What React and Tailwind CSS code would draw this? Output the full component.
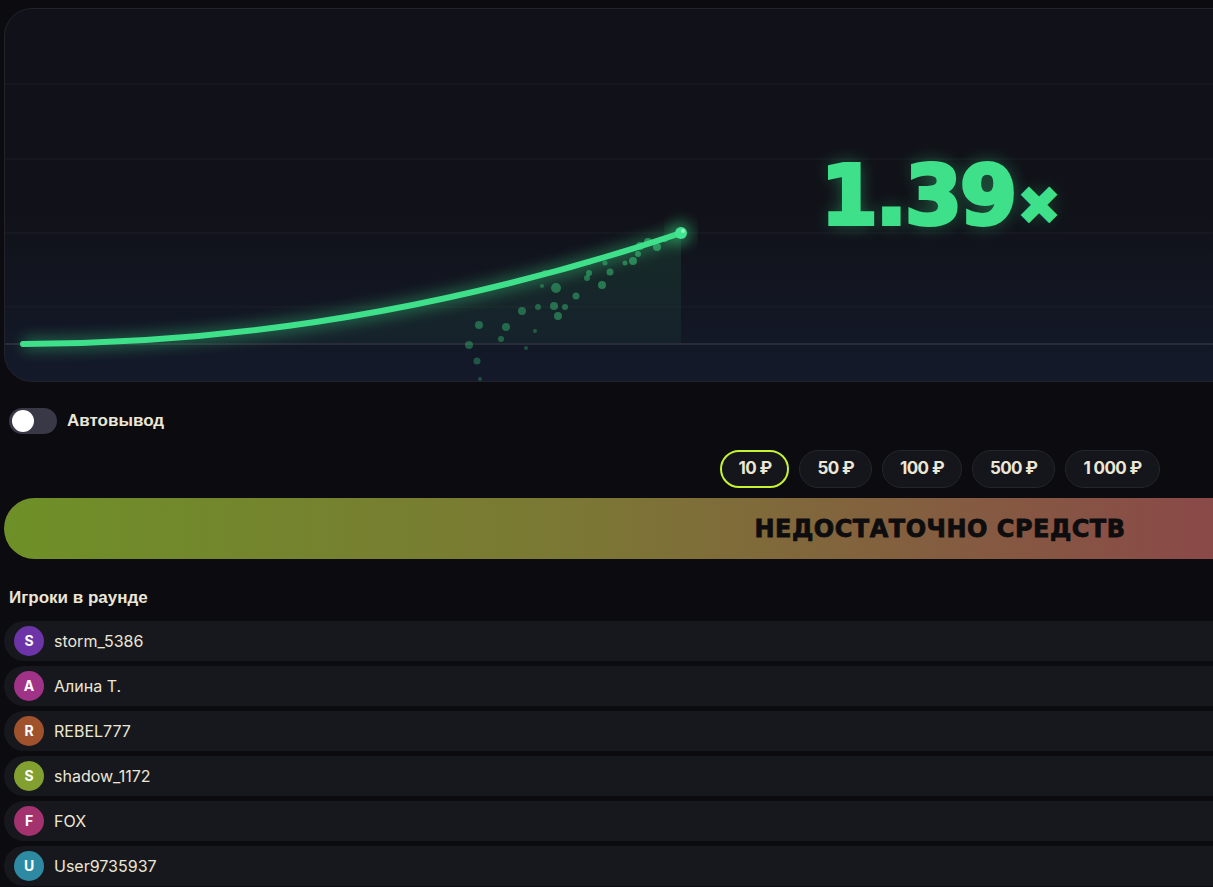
import React from "react";

const particles = [
  [478, 324, 4, 0.55], [468, 344, 4, 0.5], [476, 360, 3.5, 0.45], [479, 378, 2, 0.4],
  [505, 326, 4, 0.55], [500, 338, 3, 0.5], [525, 347, 2, 0.4], [521, 310, 4, 0.55],
  [537, 306, 3, 0.5], [534, 330, 2, 0.45], [553, 305, 4, 0.6], [557, 315, 4, 0.6],
  [564, 306, 3, 0.55], [555, 287, 5, 0.6], [541, 285, 2, 0.5], [544, 272, 3, 0.6],
  [575, 295, 3.5, 0.6], [586, 277, 3, 0.6], [588, 272, 3, 0.65], [588, 261, 3, 0.6],
  [601, 284, 4, 0.65], [609, 271, 3.5, 0.65], [604, 262, 2.5, 0.6], [624, 262, 2.5, 0.65],
  [632, 260, 4, 0.7], [637, 253, 3, 0.7], [639, 245, 4, 0.75], [647, 241, 4, 0.75],
  [656, 246, 4, 0.75], [664, 238, 3, 0.8],
];

const players = [
  { l: "S", name: "storm_5386", c: "bg-[#6c34a6]" },
  { l: "A", name: "Алина Т.", c: "bg-[#a03388]" },
  { l: "R", name: "REBEL777", c: "bg-[#a0522d]" },
  { l: "S", name: "shadow_1172", c: "bg-[#82a02f]" },
  { l: "F", name: "FOX", c: "bg-[#a3326f]" },
  { l: "U", name: "User9735937", c: "bg-[#2e8aa3]" },
];

const chips = ["10 ₽", "50 ₽", "100 ₽", "500 ₽", "1 000 ₽"];

function Chart() {
  // curve: quadratic from (18,335) to (676,224) in card coords (card at x=4,y=8)
  const curve = "M18 335 Q347 335 676 224";
  return (
    <div className="relative h-[374px] overflow-hidden rounded-[28px] border border-[#22232b] bg-[linear-gradient(180deg,#111219_0%,#111219_55%,#141a2b_100%)]">
      <svg className="absolute inset-0" width="1872" height="374">
        <defs>
          <linearGradient id="area" x1="0" y1="0" x2="0" y2="1">
            <stop offset="0%" stopColor="#3ddc84" stopOpacity="0.12" />
            <stop offset="100%" stopColor="#3ddc84" stopOpacity="0.05" />
          </linearGradient>
          <filter id="glow" x="-20%" y="-50%" width="140%" height="200%">
            <feGaussianBlur stdDeviation="7" />
          </filter>
        </defs>
        {[75, 150, 224, 298].map((y) => (
          <line key={y} x1="0" x2="1872" y1={y} y2={y} stroke="#1d1f27" strokeWidth="1" />
        ))}
        <path d={`${curve} L676 335 Z`} fill="url(#area)" />
        <line x1="0" x2="1872" y1="335" y2="335" stroke="#2a2d38" strokeWidth="2" />
        {particles.map(([x, y, r, o], i) => (
          <circle key={i} cx={x - 4} cy={y - 8} r={r} fill="#3ddc84" opacity={o * 0.7} />
        ))}
        <path d={curve} fill="none" stroke="#3ddc84" strokeWidth="14" opacity="0.35" filter="url(#glow)" />
        <path d={curve} fill="none" stroke="#3ee08a" strokeWidth="6" strokeLinecap="round" />
        <circle cx="676" cy="224" r="12" fill="#3ddc84" opacity="0.4" filter="url(#glow)" />
        <circle cx="676" cy="224" r="6" fill="#42e690" />
        <circle cx="678" cy="222" r="2" fill="#b8f7d2" opacity="0.7" />
      </svg>
      <div className="absolute left-0 right-0 top-[146px] flex justify-center">
        <div className="flex items-end font-['DejaVu_Sans',sans-serif] font-bold text-[#3ee08a] [-webkit-text-stroke:4px_#3ee08a] [text-shadow:0_0_18px_rgba(62,224,138,0.45)]">
          <span className="text-[82px] leading-[82px] tracking-[-2px]">1.39</span>
          <span className="mb-[10px] ml-[4px] text-[48px] leading-[48px] [-webkit-text-stroke:6px_#3ee08a]">×</span>
        </div>
      </div>
    </div>
  );
}

export default function App() {
  return (
    <div className="h-screen w-full overflow-hidden bg-[#0b0b10] font-['Inter',sans-serif]">
      <div className="ml-1 w-[1872px] pt-2">
        <Chart />

        <div className="mt-[26px] flex items-center pl-[5px]">
          <div className="flex h-[26px] w-12 items-center rounded-full bg-[#383846] px-[3px]">
            <div className="h-[22px] w-[22px] rounded-full bg-white" />
          </div>
          <span className="ml-[10px] font-['Liberation_Sans',sans-serif] text-[17px] font-bold text-[#ece6d6]">
            Автовывод
          </span>
        </div>

        <div className="mt-4 flex justify-center gap-[10px]">
          {chips.map((c, i) => (
            <button
              key={c}
              className={
                i === 0
                  ? "h-[38px] rounded-full border-2 border-[#c6f432] bg-[#15161b] px-[16px] text-[17px] font-bold tracking-[-0.6px] text-[#ece6d6]"
                  : "h-[38px] rounded-full border border-[#25262c] bg-[#15161b] px-[17px] text-[17px] font-bold tracking-[-0.6px] text-[#ece6d6]"
              }
            >
              {c}
            </button>
          ))}
        </div>

        <div className="mt-[10px] flex h-[61px] items-center justify-center rounded-full bg-[linear-gradient(90deg,#6e9028_0%,#7b7834_30%,#8a4a48_64%,#9a3a48_100%)]">
          <span className="font-['DejaVu_Sans',sans-serif] text-[24px] font-bold tracking-[0.5px] text-[#0d0d0f] [-webkit-text-stroke:0.8px_#0d0d0f]">
            НЕДОСТАТОЧНО СРЕДСТВ
          </span>
        </div>

        <div className="mt-[26px] pl-[5px] font-['Liberation_Sans',sans-serif] text-[17px] font-bold text-[#ece6d6]">
          Игроки в раунде
        </div>

        <div className="mt-[10px] flex flex-col gap-[5px]">
          {players.map((p) => (
            <div key={p.name} className="flex h-10 items-center gap-[10px] rounded-full bg-[#17181d] pl-[10px]">
              <div className={`flex h-[30px] w-[30px] items-center justify-center rounded-full ${p.c} text-[14px] font-bold text-white`}>
                {p.l}
              </div>
              <span className="text-[16px] text-[#ece6d6]">{p.name}</span>
            </div>
          ))}
        </div>
      </div>
    </div>
  );
}
